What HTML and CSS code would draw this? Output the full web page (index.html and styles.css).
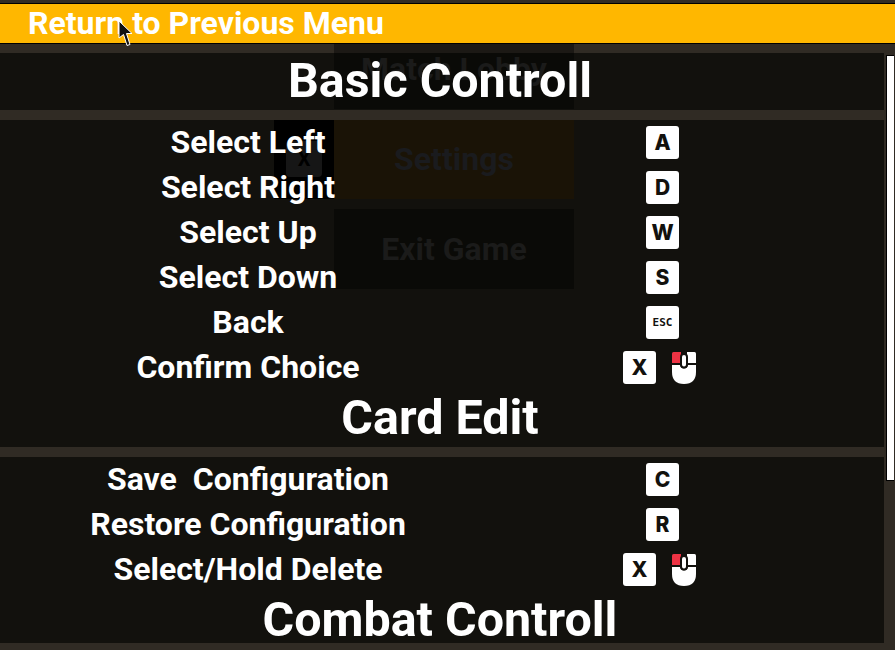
FILE: index.html
```html
<!DOCTYPE html>
<html lang="en">
<head>
    <meta charset="UTF-8">
    <meta name="viewport" content="width=device-width, initial-scale=1.0">
    <title>Controls</title>
    <link rel="stylesheet" href="styles.css">
</head>
<body>
    <div class="top-edge"></div>
    <div class="return-bar">Return to Previous Menu</div>
    <div class="band band-top"></div>

    <!-- game menu showing through behind the controls panel -->
    <div class="ghost-menu">
        <div class="ghost-btn">Match Lobby</div>
        <div class="ghost-row">
            <div class="ghost-close"><span class="ghost-close-key">X</span></div>
            <div class="ghost-btn ghost-settings">Settings</div>
        </div>
        <div class="ghost-btn">Exit Game</div>
    </div>

    <div class="main">
        <div class="scroll-view">
            <h2 class="section-title">Basic Controll</h2>
            <div class="band"></div>
            <div class="row"><span class="label">Select Left</span><div class="keys"><span class="key">A</span></div></div>
            <div class="row"><span class="label">Select Right</span><div class="keys"><span class="key">D</span></div></div>
            <div class="row"><span class="label">Select Up</span><div class="keys"><span class="key">W</span></div></div>
            <div class="row"><span class="label">Select Down</span><div class="keys"><span class="key">S</span></div></div>
            <div class="row"><span class="label">Back</span><div class="keys"><span class="key key-small">ESC</span></div></div>
            <div class="row">
                <span class="label">Confirm Choice</span>
                <div class="keys keys-double">
                    <span class="key key-x">X</span>
                    <svg class="mouse" viewBox="0 0 24 32" width="24" height="32">
                        <path d="M0 1.5Q0 0 1.5 0H9V11H0Z" fill="#ee3344"/>
                        <path d="M15 0H22.5Q24 0 24 1.5V11H15Z" fill="#fff"/>
                        <path d="M0 13H8Q9 16.500 12 16.500Q15 16.500 16 13H24V20Q24 32 12 32Q0 32 0 20Z" fill="#fff"/>
                        <rect x="9" y="2" width="6" height="13.500" rx="3" fill="#fff" stroke="#12110d" stroke-width="2"/>
                    </svg>
                </div>
            </div>
            <h2 class="section-title">Card Edit</h2>
            <div class="band"></div>
            <div class="row"><span class="label">Save  Configuration</span><div class="keys"><span class="key">C</span></div></div>
            <div class="row"><span class="label">Restore Configuration</span><div class="keys"><span class="key">R</span></div></div>
            <div class="row">
                <span class="label">Select/Hold Delete</span>
                <div class="keys keys-double">
                    <span class="key key-x">X</span>
                    <svg class="mouse" viewBox="0 0 24 32" width="24" height="32">
                        <path d="M0 1.5Q0 0 1.5 0H9V11H0Z" fill="#ee3344"/>
                        <path d="M15 0H22.5Q24 0 24 1.5V11H15Z" fill="#fff"/>
                        <path d="M0 13H8Q9 16.500 12 16.500Q15 16.500 16 13H24V20Q24 32 12 32Q0 32 0 20Z" fill="#fff"/>
                        <rect x="9" y="2" width="6" height="13.500" rx="3" fill="#fff" stroke="#12110d" stroke-width="2"/>
                    </svg>
                </div>
            </div>
            <h2 class="section-title">Combat Controll</h2>
        </div>
        <div class="scrollbar"><div class="scroll-thumb"></div></div>
    </div>
    <div class="bottom-edge"></div>

    <svg class="cursor" viewBox="0 0 16 28" width="16" height="28">
        <path d="M1 1V18L5.500 14.500L9 25.500L12 24.500L8.500 13.500H14Z" fill="#111" stroke="#fff" stroke-width="1"/>
    </svg>
</body>
</html>
```

FILE: styles.css
```css
* {
    box-sizing: border-box;
}
html, body {
    height: 650px;
}
body {
    margin: 0;
    position: relative;
    display: flex;
    flex-direction: column;
    overflow: hidden;
    background-color: #12110d;
    color: #ffffff;
    font-family: Roboto, "Liberation Sans", sans-serif;
}
.top-edge {
    height: 4px;
    flex: none;
    background-color: #332d25;
    border-bottom: 1px solid #000000;
}
.return-bar {
    height: 40px;
    flex: none;
    padding-left: 28px;
    background-color: #ffb700;
    border-bottom: 1px solid #000000;
    font-size: 32px;
    font-weight: 700;
    line-height: 39px;
    position: relative;
    z-index: 2;
}
.band {
    height: 10px;
    flex: none;
    background-color: #302b24;
}
.band-top {
    height: 9px;
}
.main {
    flex: 1;
    min-height: 0;
    display: flex;
    position: relative;
    z-index: 2;
}
.scroll-view {
    width: 884px;
    overflow: hidden;
}
.section-title {
    height: 57px;
    margin: 0;
    padding-right: 4px;
    text-align: center;
    font-size: 48.4px;
    font-weight: 700;
    line-height: 55px;
}
.row {
    height: 45px;
    display: flex;
    align-items: center;
}
.label {
    width: 496px;
    flex: none;
    text-align: center;
    white-space: pre;
    font-size: 32px;
    font-weight: 700;
    line-height: 43px;
}
.keys {
    margin-left: 150px;
    display: flex;
    align-items: center;
}
.keys-double {
    margin-left: 127px;
}
.key {
    width: 33px;
    height: 33px;
    display: flex;
    align-items: center;
    justify-content: center;
    background-color: #ffffff;
    border-radius: 3px;
    color: #12110d;
    font-family: Inter, sans-serif;
    font-size: 21px;
    font-weight: 800;
}
.key-small {
    font-family: "DejaVu Sans Mono", monospace;
    font-size: 11px;
    font-weight: 700;
}
.mouse {
    margin-left: 16px;
}
.scrollbar {
    flex: 1;
    background-color: #302b24;
    padding: 2px 0 0 2px;
}
.scroll-thumb {
    width: 8px;
    height: 426px;
    background-color: #ffffff;
    border: 1px solid #000000;
    border-right: none;
}
.bottom-edge {
    height: 7px;
    flex: none;
    background-color: #302b24;
    position: relative;
    z-index: 2;
}

/* menu behind the panel, barely visible */
.ghost-menu {
    position: absolute;
    left: 274px;
    top: 29px;
    width: 300px;
    z-index: 1;
    display: flex;
    flex-direction: column;
    align-items: flex-end;
    gap: 10px;
}
.ghost-btn {
    width: 240px;
    height: 80px;
    display: flex;
    align-items: center;
    justify-content: center;
    font-size: 32px;
    font-weight: 700;
    color: #1b1b1a;
    background-color: rgba(0, 0, 0, 0.4);
}
.ghost-row {
    display: flex;
}
.ghost-settings {
    background-color: #1a1306;
    color: #1a1b1e;
}
.ghost-close {
    width: 60px;
    height: 80px;
    display: flex;
    align-items: center;
    justify-content: center;
    background-color: #000000;
}
.ghost-close-key {
    width: 36px;
    height: 36px;
    display: flex;
    align-items: center;
    justify-content: center;
    background-color: #161616;
    border-radius: 4px;
    color: #000000;
    font-size: 20px;
    font-weight: 700;
}
.cursor {
    position: absolute;
    left: 118px;
    top: 20px;
    z-index: 3;
}
```
